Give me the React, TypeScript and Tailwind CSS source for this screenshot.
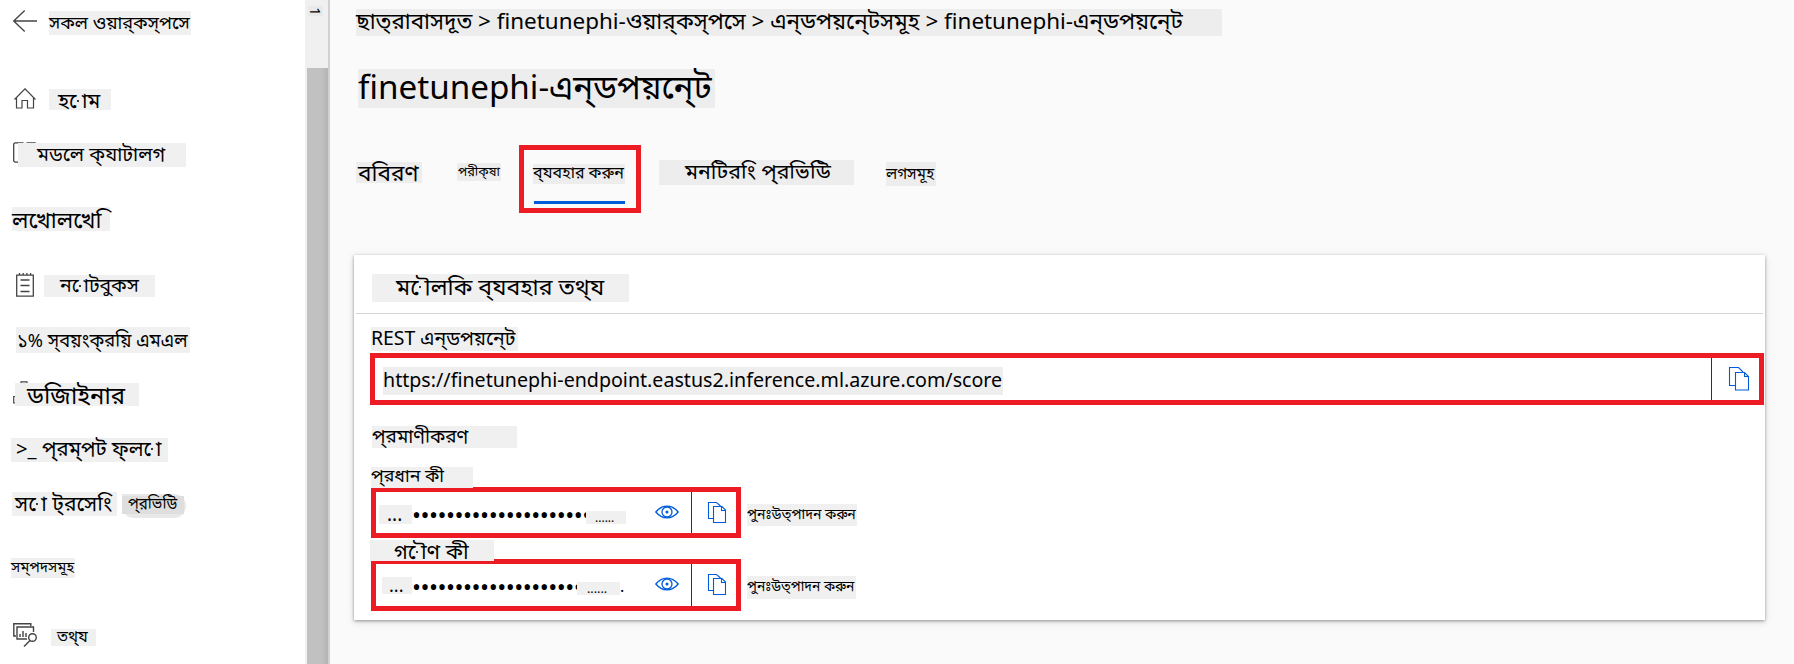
import type { ReactNode } from "react";

const BLUE = "#015cda";

/* A text on a tinted strip. Size, line height and padding come from the classes. */
function Label({ className, children }: { className: string; children: ReactNode }) {
  return <div className={`shrink-0 whitespace-nowrap text-black ${className}`}>{children}</div>;
}

/* Vowel sign drawn in two halves with a dot between them. */
function SplitVowel({ sign }: { sign: string }) {
  return (
    <span className="relative">
      {"\u00a0" + sign}
      <span className="absolute left-[0.37em] top-[50%] size-[2px] rounded-full bg-black" />
    </span>
  );
}

/* Vowel sign that stands on its own, with the anusvara tucked under its hood. */
function HoodedAnusvara() {
  return (
    <>
      {"\u00a0ি"}
      <span className="-ml-[0.52em]">{"\u00a0ং"}</span>
    </>
  );
}

function CopyIcon() {
  return (
    <svg width="22" height="25" viewBox="0 0 22 25" fill="none" stroke={BLUE} strokeWidth="1.1" className="shrink-0">
      <path d="M7 19.5H1.5V1.5h9L15 6" />
      <path d="M7.5 6.5h9l4 4v13.5h-13zM16.500 6.500v4h4" />
    </svg>
  );
}

function CopySmallIcon() {
  return (
    <svg width="20" height="22" viewBox="0 0 20 22" fill="none" stroke={BLUE} strokeWidth="1.1" className="shrink-0">
      <path d="M6 17.500H1.500V1.500h8L13.500 5" />
      <path d="M6.500 5.500h8.500l3.500 3.500v12.500h-12zM14.500 5.500v4h4" />
    </svg>
  );
}

function EyeIcon() {
  return (
    <svg width="24" height="14" viewBox="0 0 24 14" fill="none" stroke={BLUE} strokeWidth="1.3" className="shrink-0">
      <path d="M.8 7C4.300 2.800 8 1.200 12 1.200S19.700 2.800 23.200 7C19.700 11.200 16 12.800 12 12.800S4.300 11.200.8 7Z" />
      <circle cx="12" cy="7" r="5" />
      <circle cx="12" cy="7" r="1.500" fill={BLUE} stroke="none" />
    </svg>
  );
}

function Sidebar() {
  return (
    <nav className="flex w-[305px] shrink-0 flex-col items-start bg-white">
      <div className="mt-[10px] flex h-[25px] items-start">
        <svg width="24" height="22" viewBox="0 0 24 22" fill="none" stroke="#444" strokeWidth="1.3" className="ml-[13px]">
          <path d="M11.700.5.8 11l10.900 10.500M.8 11H24" />
        </svg>
        <Label className="ml-3 mt-px h-6 w-[142px] bg-[#f0f0f0] text-[18.1px] leading-[22px]">{"সকল ওয়ার্\u200cকস্\u200cপসে"}</Label>
      </div>

      <div className="mt-[53px] flex h-[22px] items-start">
        <svg width="22" height="21" viewBox="0 0 22 21" fill="none" stroke="#444" strokeWidth="1.2" className="ml-[14px]">
          <path d="M.5 11.500 11 .8l10.500 10.700M2.500 9.500V20h5.500v-7.500h5.500V20h6V9.500" />
        </svg>
        <Label className="ml-[13px] mt-px h-[21px] w-[62px] bg-[#f0f0f0] pl-[9px] text-[20.8px] leading-[22px]">
          হ<SplitVowel sign="ো" />ম
        </Label>
      </div>

      <div className="mt-8 flex h-[25px] items-start">
        <svg width="24" height="21" viewBox="0 0 24 21" fill="none" stroke="#444" strokeWidth="1.3" className="ml-[13px]">
          <path d="M10.500.8H2L.7 2v17L2 20.200h4M13.500.8H22l1.300 1.200" />
        </svg>
        <Label className="relative -ml-[19px] mt-px h-6 w-[168px] bg-[#f0f0f0] pl-[19px] text-[19.5px] leading-[21px]">{"মডলে ক্\u200cযাটালগ"}</Label>
      </div>

      <Label className="ml-3 mt-10 h-6 w-[98px] bg-[#f0f0f0] text-[22.6px] leading-[26px]">{"লখোলখে\u00a0ি"}</Label>

      <div className="mt-[42px] flex h-6 items-start">
        <svg width="18" height="24" viewBox="0 0 18 24" fill="none" stroke="#444" strokeWidth="1.3" className="ml-4">
          <path d="M.7 2.200h16.600v21H.7zM3.500 0v2.500M7.200 0v2.500M10.900 0v2.500M14.600 0v2.500M4.500 7h9M4.500 12.500h9M4.500 18.500h9" />
        </svg>
        <Label className="ml-[10px] mt-[2px] h-[22px] w-[111px] bg-[#f0f0f0] pl-4 text-[19.4px] leading-[19px]">
          ন<SplitVowel sign="ো" />টবুকস
        </Label>
      </div>

      <Label className="ml-4 mt-[30px] h-[26px] w-[174px] bg-[#f0f0f0] pl-px text-[18.3px] leading-[25px]">{"১% স্\u200cবয়ংক্\u200cরয়ি এমএল"}</Label>

      <div className="mt-[28px] flex h-[25px] items-start">
        <svg width="16" height="23" viewBox="0 0 16 23" fill="none" stroke="#444" strokeWidth="1.2" className="ml-[13px]">
          <path d="M8 3V.8h6V3M3 15.500H.7v6.500H3" />
        </svg>
        <Label className="relative -ml-[14px] mt-[2px] h-[23px] w-[124px] bg-[#f0f0f0] pl-3 text-[23.9px] leading-[24px]">ডজিাইনার</Label>
      </div>

      <Label className="ml-[11px] mt-[32px] h-6 w-[157px] bg-[#f0f0f0] pl-[5px] text-[20.3px] leading-[21px]">
        {">_ প্\u200cরম্\u200cপট ফ্\u200cল"}
        <SplitVowel sign="ো" />
      </Label>

      <div className="mt-[30px] flex h-[26px] items-start">
        <Label className="ml-3 h-6 w-[105px] bg-[#f0f0f0] pl-[3px] text-[21.1px] leading-[21px]">
          স<SplitVowel sign="ো" />
          {" ট্\u200cরসে"}
          <HoodedAnusvara />
        </Label>
        <div className="ml-[5px] mt-[2px] h-6 w-16 rounded-full rounded-tl-none bg-[#e8e8e8]">
          <Label className="mt-[2px] h-[18px] w-[62px] bg-[#dedede] pl-[6px] text-[15.1px] leading-[15px]">{"প্\u200cরভিউি"}</Label>
        </div>
      </div>

      <Label className="ml-[11px] mt-10 h-5 w-16 bg-[#f0f0f0] text-[14.8px] leading-[16px]">{"সম্\u200cপদসমূহ"}</Label>

      <div className="mt-[45px] flex h-6 items-start">
        <svg width="24" height="24" viewBox="0 0 24 24" fill="none" stroke="#444" strokeWidth="1.4" className="ml-[13px]">
          <path d="M3 13H.8V.8h17V3M14 16H4V4h16.500v5" />
          <path d="M7 14v-3M10 14V8M13 14v-4" />
          <circle cx="19.500" cy="14.500" r="3.800" />
          <path d="m17 17.500-6 6" />
        </svg>
        <Label className="ml-[14px] mt-[6px] h-[17px] w-[45px] bg-[#f0f0f0] pl-[6px] text-[15.5px] leading-[15px]">{"তথ্\u200cয"}</Label>
      </div>
    </nav>
  );
}

function ScrollStrip() {
  return (
    <div className="flex w-[25px] shrink-0 border-r-2 border-[#d2d2d2] bg-[#f0f0f0] pl-[2px]">
      <div className="w-[21px]">
        <div className="flex h-[68px] items-start pl-px pt-[6px]">
          <div className="flex h-[10px] w-[15px] items-center justify-center bg-[#e9e9e9]">
            <span className="rotate-90 text-[15px] leading-none text-black">1</span>
          </div>
        </div>
        <div className="h-[596px] bg-linear-to-r from-[#c1c1c1] from-70% to-[#b4b4b4]" />
      </div>
    </div>
  );
}

function KeyBox({ className, lead, dots, tail }: { className: string; lead: ReactNode; dots: ReactNode; tail: ReactNode }) {
  return (
    <div className={`flex w-[370px] items-start border-[5px] border-[#ed1c24] ${className}`}>
      <div className="flex w-[315px] shrink-0 items-start">
        {lead}
        {dots}
        {tail}
      </div>
      <div className="h-full w-px shrink-0 bg-[#333]" />
      <div className="ml-[15px] mt-[9px]">
        <CopySmallIcon />
      </div>
    </div>
  );
}

export default function App() {
  return (
    <div className="flex h-[664px] w-[1794px] overflow-hidden bg-[#fafafa] font-['Noto_Sans','Noto_Sans_Bengali',sans-serif]">
      <Sidebar />
      <ScrollStrip />
      <main className="flex flex-1 flex-col items-start">
        <Label className="ml-[26px] mt-[9px] h-[27px] w-[866px] bg-[#ededed] text-[22.42px] leading-[24px]">
          {"ছাত্\u200cরাবাসদূত > finetunephi-ওয়ার্\u200cকস্\u200cপসে > এন্\u200cডপয়নে্\u200cটসমূহ > finetunephi-এন্\u200cডপয়নে্\u200cট"}
        </Label>
        <Label className="ml-[28px] mt-[33px] h-[39px] w-[357px] bg-[#ededed] text-[33.2px] leading-[35px]">{"finetunephi-এন্\u200cডপয়নে্\u200cট"}</Label>

        <div className="ml-[26px] mt-[37px] flex h-[68px] items-start">
          <Label className="mt-[17px] h-[21px] w-[66px] bg-[#ededed] pl-[2px] text-[22.6px] leading-[22px]">ববিরণ</Label>
          <Label className="ml-[35px] mt-[18px] h-[18px] w-11 bg-[#ededed] pl-px text-[12.8px] leading-[16px]">{"পরীক্\u200cষা"}</Label>
          <div className="ml-[18px] h-[68px] w-[122px] border-[5px] border-[#ed1c24] px-[9px]">
            <Label className="mt-[14px] h-5 w-[92px] bg-[#ededed] text-[16px] leading-[16px]">{"ব্\u200cযবহার করুন"}</Label>
            <div className="ml-px mt-[17px] h-[3px] w-[91px] bg-[#015cda]" />
          </div>
          <Label className="ml-[18px] mt-[15px] h-[25px] w-[195px] bg-[#ededed] pl-[26px] text-[21.3px] leading-[21px]">
            মনটির
            <HoodedAnusvara />
            {" প্\u200cরভিউি"}
          </Label>
          <Label className="ml-8 mt-[17px] h-6 w-[50px] bg-[#ededed] text-[15.3px] leading-[22px]">লগসমূহ</Label>
        </div>

        <section className="ml-6 mt-[42px] flex h-[365px] w-[1411px] flex-col items-start bg-white shadow-[0_1px_3px_rgba(0,0,0,0.35),0_2px_8px_rgba(0,0,0,0.12)]">
          <Label className="ml-[18px] mt-[19px] h-7 w-[257px] bg-[#f0f0f0] pl-6 text-[23.1px] leading-[24px]">
            ম<SplitVowel sign="ৌ" />
            {"লকি ব্\u200cযবহার তথ্\u200cয"}
          </Label>
          <div className="ml-[2px] mt-[11px] h-px w-[1407px] bg-[#d4d4d4]" />
          <Label className="ml-[17px] mt-[13px] h-6 w-[147px] bg-[#f0f0f0] text-[19.4px] leading-[21px]">{"REST এন্\u200cডপয়নে্\u200cট"}</Label>

          <div className="ml-4 mt-[2px] flex h-[52px] w-[1394px] items-start border-[5px] border-[#ed1c24]">
            <Label className="ml-2 mt-[9px] h-7 w-[620px] bg-[#eee] text-[19.64px] leading-[26px]">
              https://finetunephi-endpoint.eastus2.inference.ml.azure.com/score
            </Label>
            <div className="ml-auto h-full w-px bg-[#333]" />
            <div className="ml-[16px] mr-[9px] mt-[8px]">
              <CopyIcon />
            </div>
          </div>

          <Label className="ml-[18px] mt-[21px] h-[22px] w-[145px] bg-[#f0f0f0] text-[18.9px] leading-[20px]">{"প্\u200cরমাণীকরণ"}</Label>
          <Label className="relative z-10 ml-[17px] mt-[19px] h-[21px] w-[102px] bg-[#f0f0f0] text-[17.8px] leading-[17px]">{"প্\u200cরধান কী"}</Label>

          <div className="-mt-px ml-[17px] flex items-start">
            <KeyBox
              className="h-[51px]"
              lead={<Label className="ml-[3px] mt-[13px] h-[19px] w-[33px] bg-[#f0f0f0] pl-2 text-[19px] leading-[19px]">...</Label>}
              dots={<Label className="mt-[13px] h-5 w-[174px] text-[24px] leading-5 tracking-[-0.51px]">{"•".repeat(21)}</Label>}
              tail={
                <>
                  <Label className="relative mt-[19px] h-[13px] w-10 bg-[#f0f0f0] pl-[9px] text-[12px] leading-[13px]">......</Label>
                  <div className="ml-[29px] mt-[13px]">
                    <EyeIcon />
                  </div>
                </>
              }
            />
            <Label className="ml-[6px] mt-[17px] h-[22px] w-[110px] bg-[#f0f0f0] text-[14px] leading-[20px]">{"পুনঃউত্\u200cপাদন করুন"}</Label>
          </div>

          <Label className="relative z-10 ml-4 mt-[2px] h-[21px] w-[124px] bg-[#f0f0f0] pl-6 text-[21.4px] leading-[22px]">
            গ<SplitVowel sign="ৌ" />
            {"ণ কী"}
          </Label>

          <div className="-mt-[2px] ml-[17px] flex items-start">
            <KeyBox
              className="h-[52px]"
              lead={<Label className="ml-[6px] mt-[13px] h-[17px] w-[30px] bg-[#f0f0f0] pl-[7px] text-[18px] leading-[17px]">...</Label>}
              dots={<Label className="mt-[13px] h-5 w-[165px] text-[24px] leading-5 tracking-[-0.51px]">{"•".repeat(20)}</Label>}
              tail={
                <>
                  <Label className="relative mt-[18px] h-[13px] w-[43px] bg-[#f0f0f0] pl-[10px] text-[12.5px] leading-[13px]">......</Label>
                  <span className="w-[5px] text-[16px] leading-[44px] text-black">.</span>
                  <div className="ml-[30px] mt-[13px]">
                    <EyeIcon />
                  </div>
                </>
              }
            />
            <Label className="ml-[6px] mt-[17px] h-[23px] w-[109px] bg-[#f0f0f0] text-[13.8px] leading-[20px]">{"পুনঃউত্\u200cপাদন করুন"}</Label>
          </div>
        </section>
      </main>
    </div>
  );
}
